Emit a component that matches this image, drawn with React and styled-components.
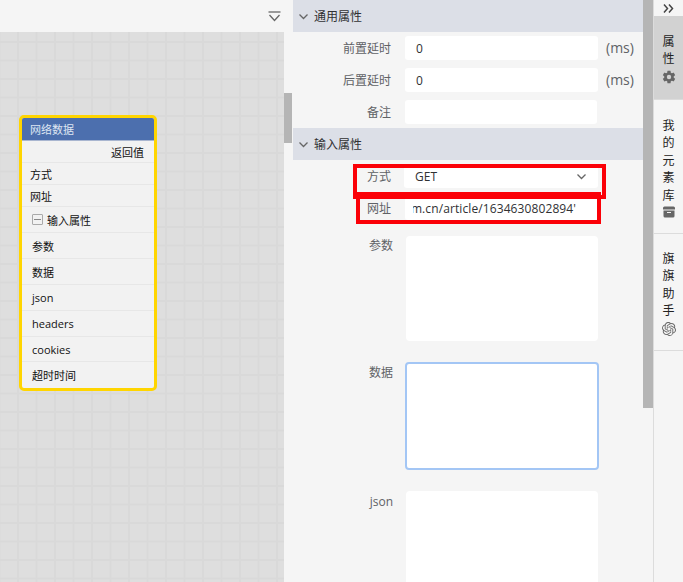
import React from 'react';
import styled, { createGlobalStyle } from 'styled-components';
import { IoSettingsSharp } from 'react-icons/io5';
import { SiOpenai } from 'react-icons/si';

const GlobalStyle = createGlobalStyle`
    html, body {
        margin: 0;
        padding: 0;
        height: 100%;
        overflow: hidden;
        background-color: #f5f5f5;
    }
    * {
        box-sizing: border-box;
    }
`

const Page = styled.div`
    position: relative;
    display: flex;
    width: 683px;
    height: 582px;
    overflow: hidden;
    background-color: #f5f5f5;
    color: #303133;
    font-family: "Open Sans", "Noto Sans CJK SC", sans-serif;
    font-size: 12px;
`

const LeftPane = styled.div`
    display: flex;
    flex-direction: column;
    width: 293px;
    flex-shrink: 0;
`

const TopBar = styled.div`
    display: flex;
    align-items: center;
    justify-content: flex-end;
    height: 32px;
    padding-right: 12px;
    flex-shrink: 0;
`

const CanvasRow = styled.div`
    display: flex;
    flex: 1;
    min-height: 0;
`

const Canvas = styled.div`
    position: relative;
    width: 284px;
    background-color: #dedede;
    background-image:
        linear-gradient(to right, #d9d9d9 2px, transparent 2px),
        linear-gradient(to bottom, #d9d9d9 2px, transparent 2px);
    background-size: 18.5px 18.5px;
    background-position: 17px 9px;
`

const ScrollTrack = styled.div`
    width: ${(p) => p.$width}px;
    flex-shrink: 0;
`

const ScrollThumb = styled.div`
    height: ${(p) => p.$height}px;
    margin-top: ${(p) => p.$top}px;
    background-color: #b5b5b5;
`

const Node = styled.div`
    position: absolute;
    left: 19px;
    top: 83px;
    width: 138px;
    height: 276px;
    border: 3px solid #ffd500;
    border-radius: 5px;
    background-color: #f2f2f2;
    color: #111;
    font-size: 11px;
    overflow: hidden;
`

const NodeTitle = styled.div`
    display: flex;
    align-items: center;
    height: 23px;
    padding-left: 8px;
    background-color: #4c6fae;
    border-bottom: 1px solid #a9b6d0;
    color: #dfe6f2;
`

const NodeRow = styled.div`
    display: flex;
    align-items: center;
    justify-content: ${(p) => (p.$right ? 'flex-end' : 'flex-start')};
    gap: 4px;
    height: ${(p) => p.$height}px;
    padding: 0 10px 0 ${(p) => p.$indent}px;
    border-bottom: ${(p) => (p.$last ? 'none' : '1px solid #e7e7e7')};
`

const Collapse = styled.span`
    display: flex;
    align-items: center;
    justify-content: center;
    width: 11px;
    height: 11px;
    border: 1px solid #aaa;
    border-radius: 1px;

    &::before {
        content: '';
        width: 7px;
        height: 1px;
        background-color: #888;
    }
`

const RightPane = styled.div`
    width: 350px;
    flex-shrink: 0;
    height: 582px;
    overflow: hidden;
`

const SectionHeader = styled.div`
    display: flex;
    align-items: center;
    height: 32px;
    padding-left: 5px;
    gap: 5px;
    background-color: #dcdfe7;
    color: #303133;
`

const Rows = styled.div`
    display: flex;
    flex-direction: column;
    gap: ${(p) => p.$gap}px;
    padding: ${(p) => p.$top}px 0 ${(p) => p.$bottom}px;
`

const Row = styled.div`
    display: flex;
    align-items: ${(p) => (p.$top ? 'flex-start' : 'center')};
    height: ${(p) => p.$height}px;
`

const Label = styled.div`
    width: 98px;
    text-align: right;
    color: #606266;
    flex-shrink: 0;
`

const AreaLabel = styled(Label)`
    width: 100px;
    padding-top: ${(p) => p.$drop}px;
    line-height: 20px;
`

const Field = styled.div`
    display: flex;
    align-items: center;
    justify-content: space-between;
    width: ${(p) => p.$width || 193}px;
    height: 100%;
    margin-left: ${(p) => p.$offset || 14}px;
    padding: 0 ${(p) => p.$inset || 11}px;
    background-color: #fff;
    border-radius: 3px;
    color: #303133;
    white-space: nowrap;
    flex-shrink: 0;
`

const UrlClip = styled.div`
    display: flex;
    justify-content: flex-end;
    width: 163px;
    margin-left: -3px;
    overflow: hidden;
    letter-spacing: 0.1px;
`

const Unit = styled.div`
    margin-left: 8px;
    margin-top: -2px;
    color: #606266;
    font-size: 14px;
`

const TextArea = styled.div`
    width: ${(p) => (p.$focus ? 194 : 192)}px;
    height: ${(p) => p.$height}px;
    margin-left: ${(p) => (p.$focus ? 12 : 13)}px;
    background-color: #fff;
    border-radius: 4px;
    border: ${(p) => (p.$focus ? '2px solid #a3c6f5' : 'none')};
    flex-shrink: 0;
`

const Sidebar = styled.div`
    width: 30px;
    flex-shrink: 0;
    border-left: 1px solid #dcdcdc;
`

const Expand = styled.div`
    display: flex;
    align-items: center;
    justify-content: center;
    height: 16px;
`

const Tab = styled.div`
    display: flex;
    flex-direction: column;
    align-items: center;
    height: ${(p) => p.$height}px;
    padding-top: ${(p) => p.$top}px;
    line-height: 17.4px;
    color: #222;
    background-color: ${(p) => (p.$active ? '#d2d2d2' : 'transparent')};
    border-bottom: 1px solid #dcdcdc;

    svg {
        margin-top: 2px;
        color: #666;
    }
`

const Highlight = styled.div`
    position: absolute;
    left: ${(p) => p.$left}px;
    top: ${(p) => p.$y}px;
    width: ${(p) => p.$width}px;
    height: ${(p) => p.$height}px;
    border: 4px solid #fb0007;
`

const Chevron = () => (
    <svg width="11" height="7" viewBox="0 0 11 7" fill="none" stroke="#666" strokeWidth="1.3">
        <path d="M1.5 1.5 L5.5 5.5 L9.5 1.5" />
    </svg>
)

const CollapseAll = () => (
    <svg width="13" height="11" viewBox="0 0 13 11" fill="none" stroke="#666" strokeWidth="1.3">
        <path d="M0.5 1 H12.5" />
        <path d="M1.5 4 L6.5 9.5 L11.5 4" />
    </svg>
)

const ExpandIcon = () => (
    <svg width="11" height="9" viewBox="0 0 11 9" fill="none" stroke="#444" strokeWidth="1.5">
        <path d="M1 0.5 L4.5 4.5 L1 8.5" />
        <path d="M6 0.5 L9.5 4.5 L6 8.5" />
    </svg>
)

const ArchiveIcon = () => (
    <svg width="12" height="12" viewBox="0 0 12 12" fill="#666">
        <path d="M1.5 0.5 H10.5 A1.5 1.5 0 0 1 12 2 V3.5 H0 V2 A1.5 1.5 0 0 1 1.5 0.5 Z" />
        <path fillRule="evenodd" d="M0.5 4.5 H11.5 V10 A1.5 1.5 0 0 1 10 11.5 H2 A1.5 1.5 0 0 1 0.5 10 Z M4 6 V7 H8 V6 Z" />
    </svg>
)

const nodeRows = [
    { text: '参数', height: 26 },
    { text: '数据', height: 26 },
    { text: 'json', height: 26 },
    { text: 'headers', height: 26 },
    { text: 'cookies', height: 25 },
    { text: '超时时间', height: 25, last: true },
]

export default class App extends React.Component {
    render() {
        return (
            <Page>
                <GlobalStyle />
                <LeftPane>
                    <TopBar>
                        <CollapseAll />
                    </TopBar>
                    <CanvasRow>
                        <Canvas>
                            <Node>
                                <NodeTitle>网络数据</NodeTitle>
                                <NodeRow $right $height={22} $indent={8}>返回值</NodeRow>
                                <NodeRow $height={22} $indent={8}>方式</NodeRow>
                                <NodeRow $height={22} $indent={8}>网址</NodeRow>
                                <NodeRow $height={26} $indent={10}>
                                    <Collapse />
                                    输入属性
                                </NodeRow>
                                {nodeRows.map((row) => (
                                    <NodeRow key={row.text} $height={row.height} $indent={10} $last={row.last}>
                                        {row.text}
                                    </NodeRow>
                                ))}
                            </Node>
                        </Canvas>
                        <ScrollTrack $width={8}>
                            <ScrollThumb $top={61} $height={50} />
                        </ScrollTrack>
                    </CanvasRow>
                </LeftPane>

                <RightPane>
                    <SectionHeader>
                        <Chevron />
                        通用属性
                    </SectionHeader>
                    <Rows $gap={8} $top={4} $bottom={4}>
                        <Row $height={24}>
                            <Label>前置延时</Label>
                            <Field>0</Field>
                            <Unit>(ms)</Unit>
                        </Row>
                        <Row $height={24}>
                            <Label>后置延时</Label>
                            <Field>0</Field>
                            <Unit>(ms)</Unit>
                        </Row>
                        <Row $height={24}>
                            <Label>备注</Label>
                            <Field $width={192} />
                        </Row>
                    </Rows>
                    <SectionHeader>
                        <Chevron />
                        输入属性
                    </SectionHeader>
                    <Rows $gap={8} $top={4} $bottom={16}>
                        <Row $height={24}>
                            <Label>方式</Label>
                            <Field $width={194} $offset={13} $inset={11}>
                                GET
                                <Chevron />
                            </Field>
                        </Row>
                        <Row $height={24}>
                            <Label>网址</Label>
                            <Field>
                                <UrlClip>m.cn/article/1634630802894'</UrlClip>
                            </Field>
                        </Row>
                    </Rows>
                    <Rows $gap={21} $top={0} $bottom={0}>
                        <Row $top $height={105}>
                            <AreaLabel $drop={0}>参数</AreaLabel>
                            <TextArea $height={105} />
                        </Row>
                        <Row $top $height={108}>
                            <AreaLabel $drop={1}>数据</AreaLabel>
                            <TextArea $focus $height={108} />
                        </Row>
                        <Row $top $height={105}>
                            <AreaLabel $drop={1}>json</AreaLabel>
                            <TextArea $height={105} />
                        </Row>
                    </Rows>
                </RightPane>

                <ScrollTrack $width={10}>
                    <ScrollThumb $top={0} $height={408} />
                </ScrollTrack>

                <Sidebar>
                    <Expand>
                        <ExpandIcon />
                    </Expand>
                    <Tab $active $height={84} $top={17}>
                        <span>属</span>
                        <span>性</span>
                        <IoSettingsSharp size={14} />
                    </Tab>
                    <Tab $height={134} $top={17}>
                        <span>我</span>
                        <span>的</span>
                        <span>元</span>
                        <span>素</span>
                        <span>库</span>
                        <ArchiveIcon />
                    </Tab>
                    <Tab $height={117} $top={16}>
                        <span>旗</span>
                        <span>旗</span>
                        <span>助</span>
                        <span>手</span>
                        <SiOpenai size={14} />
                    </Tab>
                </Sidebar>

                <Highlight $left={353} $y={164} $width={253} $height={35} />
                <Highlight $left={356} $y={192} $width={245} $height={32} />
            </Page>
        )
    }
}
